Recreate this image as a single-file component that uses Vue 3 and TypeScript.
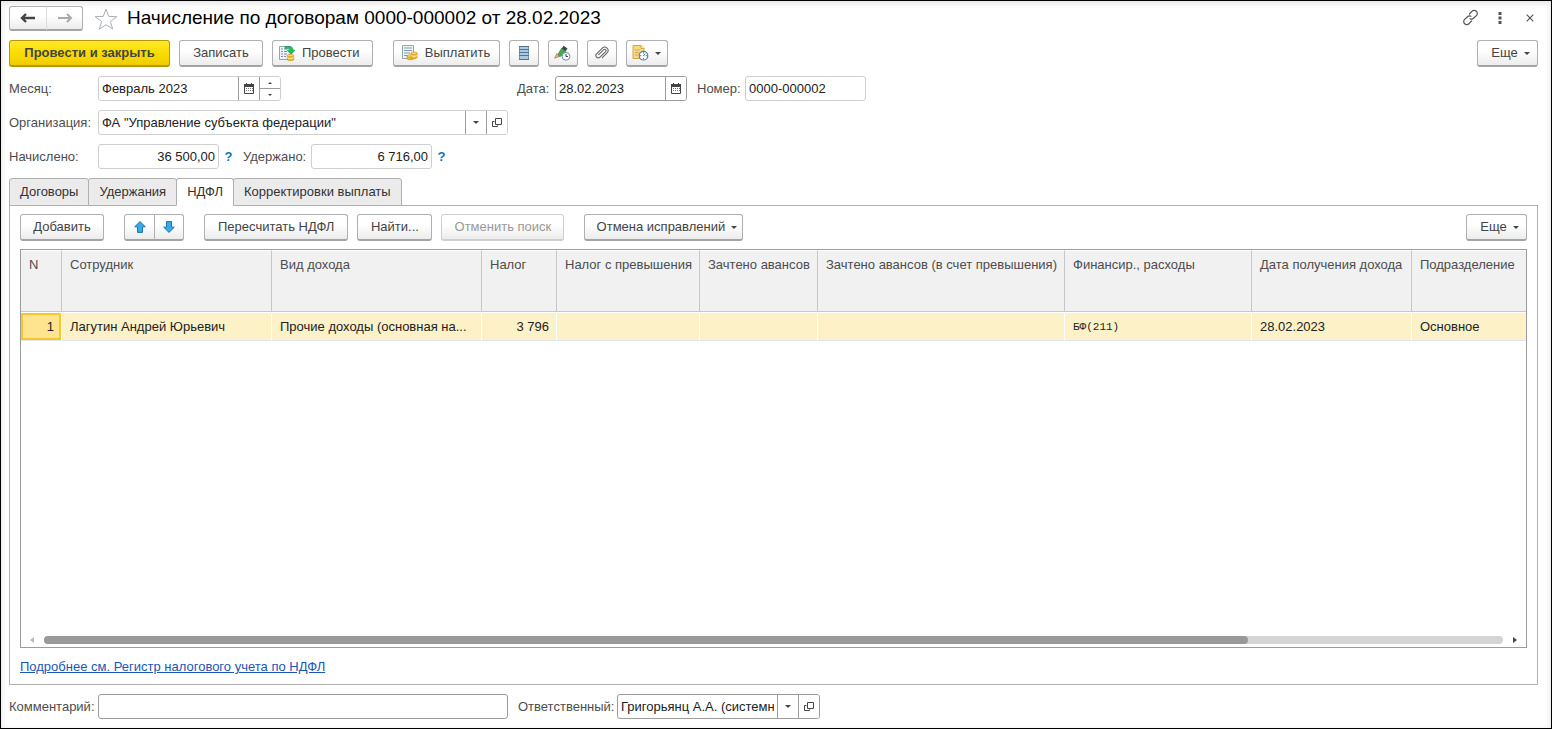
<script setup lang="ts">
import { ref } from 'vue'

interface Column {
  key: string
  title: string
  width?: number
  kind?: 'num' | 'mono'
}

const columns: Column[] = [
  { key: 'n', title: 'N', width: 41, kind: 'num' },
  { key: 'employee', title: 'Сотрудник', width: 210 },
  { key: 'income', title: 'Вид дохода', width: 210 },
  { key: 'tax', title: 'Налог', width: 75, kind: 'num' },
  { key: 'excess', title: 'Налог с превышения', width: 143, kind: 'num' },
  { key: 'advance', title: 'Зачтено авансов', width: 118, kind: 'num' },
  { key: 'advanceExcess', title: 'Зачтено авансов (в счет превышения)', width: 247, kind: 'num' },
  { key: 'funding', title: 'Финансир., расходы', width: 187, kind: 'mono' },
  { key: 'date', title: 'Дата получения дохода', width: 160 },
  { key: 'department', title: 'Подразделение' },
]

const rows: Record<string, string>[] = [
  {
    n: '1',
    employee: 'Лагутин Андрей Юрьевич',
    income: 'Прочие доходы (основная на...',
    tax: '3 796',
    excess: '',
    advance: '',
    advanceExcess: '',
    funding: 'БФ(211)',
    date: '28.02.2023',
    department: 'Основное',
  },
]

const tabs = ['Договоры', 'Удержания', 'НДФЛ', 'Корректировки выплаты']
const activeTab = ref('НДФЛ')

const month = ref('Февраль 2023')
const date = ref('28.02.2023')
const docNumber = ref('0000-000002')
const organization = ref('ФА "Управление субъекта федерации"')
const accrued = ref('36 500,00')
const withheld = ref('6 716,00')
const comment = ref('')
const responsible = ref('Григорьянц А.А. (системн')
</script>

<template>
  <svg class="defs" width="0" height="0" aria-hidden="true">
    <symbol id="i-calendar" viewBox="0 0 10 11">
      <path d="M.5 1.500h9v9h-9z" fill="#fff" stroke="#444" />
      <path d="M0 1h10v3H0zM2 0h1v2H2zM7 0h1v2H7z" fill="#444" />
      <path d="M2 5h1v1H2zM4 5h1v1H4zM6 5h1v1H6zM2 7h1v1H2zM4 7h1v1H4zM6 7h1v1H6zM8 5h1v1H8zM8 7h1v1H8z" fill="#777" />
    </symbol>
    <symbol id="i-open" viewBox="0 0 10 10">
      <path d="M3.500.500h6v6h-6z" fill="none" stroke="#444" />
      <path d="M2.500 3.500h-2v5h5v-1" fill="none" stroke="#444" />
    </symbol>
    <symbol id="i-caret" viewBox="0 0 6 3">
      <path d="M0 0h6L3 3z" fill="#444" />
    </symbol>
  </svg>

  <main class="window">
    <header class="title-bar">
      <div class="button-pair nav">
        <button type="button" class="btn" aria-label="Назад">
          <svg width="16" height="10" viewBox="0 0 16 10"><path d="M2 5h13M6 1L2 5l4 4" fill="none" stroke="#444" stroke-width="2.400" /></svg>
        </button>
        <button type="button" class="btn" aria-label="Вперед">
          <svg width="16" height="10" viewBox="0 0 16 10"><path d="M1 5h12M10 1l4 4-4 4" fill="none" stroke="#aaa" stroke-width="2" /></svg>
        </button>
      </div>
      <button type="button" class="plain star" aria-label="Избранное">
        <svg width="24" height="22" viewBox="0 0 24 22"><path d="M12 1.200l2.700 7.200 8.100.3-6.400 4.900 2.300 7.500L12 16.700l-6.700 4.400 2.300-7.500L1.200 8.700l8.100-.3z" fill="#fff" stroke="#aab0b6" /></svg>
      </button>
      <h1>Начисление по договорам 0000-000002 от 28.02.2023</h1>
      <div class="window-tools">
        <button type="button" class="plain" aria-label="Получить ссылку">
          <svg width="17" height="17" viewBox="0 0 17 17" fill="none" stroke="#555" stroke-width="1.200" stroke-linecap="round"><path d="M7.500 5l2.400-2.700a3 3 0 0 1 4.500 0 3 3 0 0 1 0 4.300L11.500 9.300a2.900 2.900 0 0 1-3.500.4M9.500 12l-2.400 2.700a3 3 0 0 1-4.500 0 3 3 0 0 1 0-4.300l2.900-2.700A2.900 2.900 0 0 1 9 7.300" /></svg>
        </button>
        <button type="button" class="plain" aria-label="Меню">
          <svg width="4" height="12" viewBox="0 0 4 12" fill="#555"><path d="M.5 0h3v3h-3zM.5 4.500h3v3h-3zM.5 9h3v3h-3z" /></svg>
        </button>
        <button type="button" class="plain" aria-label="Закрыть">
          <svg width="8" height="8" viewBox="0 0 8 8"><path d="M.7.700l6.600 6.600M7.300.700L.7 7.300" stroke="#555" stroke-width="1.200" /></svg>
        </button>
      </div>
    </header>

    <div class="toolbar">
      <button type="button" class="btn primary">Провести и закрыть</button>
      <button type="button" class="btn save">Записать</button>
      <button type="button" class="btn with-icon">
        <svg width="16" height="16" viewBox="0 0 16 16">
          <path d="M.5 1.500h11v13H.5z" fill="#eef3f6" stroke="#8fa5b3" />
          <path d="M2 4h2M5 4h3M2 6.500h2M5 6.500h3M2 9h2M5 9h3M2 11.500h2M5 11.500h2" stroke="#7891a2" />
          <path d="M6 1.500h4c3 0 4 1.300 4 3.700h2L12 9.500 8.200 5.200h2.300C10.500 4 10 3.600 8.800 3.600H6z" fill="#25bd62" stroke="#14924a" stroke-width=".6" />
          <path d="M8.300 10.500v4c0 1.700 6.400 1.700 6.400 0v-4z" fill="#efb92e" stroke="#b98610" stroke-width=".6" />
          <path d="M8.300 12.300c0 1.500 6.400 1.500 6.400 0" fill="none" stroke="#fff0a5" />
          <ellipse cx="11.500" cy="10.400" rx="3.200" ry="1.200" fill="#fbd968" stroke="#c9951a" stroke-width=".6" />
        </svg>
        <span>Провести</span>
      </button>
      <button type="button" class="btn with-icon pay">
        <svg width="16" height="16" viewBox="0 0 16 16">
          <path d="M.5.500h11v13H.5z" fill="#f1f5f7" stroke="#8fa5b3" />
          <path d="M2 3h8M2 5.500h8M2 8h6M2 10.500h4" stroke="#8299a8" />
          <path d="M5 11v2.500c0 1.500 6 1.900 6 .2V11z" fill="#efb92e" stroke="#b98610" stroke-width=".6" />
          <ellipse cx="8" cy="11" rx="3" ry="1.200" fill="#fbd968" stroke="#c9951a" stroke-width=".6" />
          <path d="M9 8v4.500c0 2 6 1.600 6 0V8z" fill="#efb92e" stroke="#b98610" stroke-width=".6" />
          <path d="M9 10.300c0 1.400 6 1.400 6 0" fill="none" stroke="#fff0a5" />
          <ellipse cx="12" cy="8.200" rx="3" ry="1.300" fill="#fbd968" stroke="#c9951a" stroke-width=".6" />
        </svg>
        <span>Выплатить</span>
      </button>
      <button type="button" class="btn icon" aria-label="Реестр">
        <svg width="10" height="14" viewBox="0 0 10 14"><path d="M.5.500h9v13h-9z" fill="#a9cbe2" stroke="#6f94b0" /><path d="M0 .500h10M0 3.500h10M0 6.500h10M0 9.500h10M0 13.500h10" stroke="#4f7590" /></svg>
      </button>
      <button type="button" class="btn icon" aria-label="Отложенное исправление">
        <svg width="17" height="16" viewBox="0 0 17 16">
          <path d="M9.500.800l4 2.700-2 3-4-2.700z" fill="#3d4a44" />
          <path d="M7.500 3.500l4 2.800-4.700 5-4.300.3z" fill="#41ad50" stroke="#248238" stroke-width=".6" />
          <path d="M2.800 8.500L.5 13.200l5-1.600z" fill="#e8b487" stroke="#8b5e3b" stroke-width=".5" />
          <circle cx="12" cy="11.300" r="3.900" fill="#fff" stroke="#6a93ab" />
          <path d="M12 9v2.500h2" fill="none" stroke="#345" />
        </svg>
      </button>
      <button type="button" class="btn icon" aria-label="Файлы">
        <svg width="14" height="14" viewBox="0 0 14 14"><path d="M3.700 8.700l5-5a1.300 1.300 0 0 1 1.900 1.900L5 11.200a2.300 2.300 0 0 1-3.400-3.300l5.700-5.800a3.300 3.300 0 0 1 4.800 4.700l-4.800 4.900" fill="none" stroke="#666" stroke-width="1.100" stroke-linecap="round" /></svg>
      </button>
      <button type="button" class="btn icon wide" aria-label="Создать на основании">
        <svg width="17" height="16" viewBox="0 0 17 16">
          <path d="M1 .500h8l3 3v10H1z" fill="#f5da83" stroke="#cfa947" />
          <path d="M9 .500v3h3" fill="#fff3c4" stroke="#cfa947" />
          <path d="M3 5h5M3 7.500h4M3 10h3" stroke="#d0ac4e" />
          <circle cx="11.500" cy="10.700" r="4.300" fill="#fff" stroke="#4c83b5" stroke-width="1.200" />
          <path d="M11.500 7.300v1.200M11.500 13v1.200M8.100 10.700h1.200M13.700 10.700h1.200" stroke="#d33" />
          <path d="M11.300 11l2-2.300" stroke="#2f6ea8" />
        </svg>
        <svg class="caret" width="6" height="3"><use href="#i-caret" /></svg>
      </button>
      <button type="button" class="btn more">Еще <svg class="caret" width="6" height="3"><use href="#i-caret" /></svg></button>
    </div>

    <div class="form-row">
      <label class="lead" for="month">Месяц:</label>
      <div class="slot">
        <div class="field month">
          <input id="month" v-model="month" type="text">
          <button type="button" aria-label="Выбрать месяц"><svg width="10" height="11"><use href="#i-calendar" /></svg></button>
          <div class="spinner">
            <button type="button" aria-label="Следующий месяц"><svg class="up" width="4" height="2"><use href="#i-caret" /></svg></button>
            <button type="button" aria-label="Предыдущий месяц"><svg width="4" height="2"><use href="#i-caret" /></svg></button>
          </div>
        </div>
      </div>
      <label class="date-label" for="date">Дата:</label>
      <div class="field strong date">
        <input id="date" v-model="date" type="text">
        <button type="button" aria-label="Выбрать дату"><svg width="10" height="11"><use href="#i-calendar" /></svg></button>
      </div>
      <label class="number-label" for="number">Номер:</label>
      <div class="field short"><input id="number" v-model="docNumber" type="text"></div>
    </div>

    <div class="form-row">
      <label class="lead" for="organization">Организация:</label>
      <div class="field slot">
        <input id="organization" v-model="organization" type="text">
        <button type="button" aria-label="Выбрать организацию"><svg width="6" height="3"><use href="#i-caret" /></svg></button>
        <button type="button" aria-label="Открыть организацию"><svg width="10" height="10"><use href="#i-open" /></svg></button>
      </div>
    </div>

    <div class="form-row">
      <label class="lead" for="accrued">Начислено:</label>
      <div class="field short amount"><input id="accrued" v-model="accrued" type="text"></div>
      <button type="button" class="plain help">?</button>
      <label class="withheld-label" for="withheld">Удержано:</label>
      <div class="field short amount"><input id="withheld" v-model="withheld" type="text"></div>
      <button type="button" class="plain help">?</button>
    </div>

    <nav class="tabs" role="tablist">
      <button
        v-for="tab in tabs"
        :key="tab"
        type="button"
        role="tab"
        :aria-selected="tab === activeTab"
        :class="{ active: tab === activeTab }"
        @click="activeTab = tab"
      >{{ tab }}</button>
    </nav>

    <section class="panel">
      <div class="toolbar">
        <button type="button" class="btn add">Добавить</button>
        <div class="button-pair spaced">
          <button type="button" class="btn" aria-label="Вверх">
            <svg width="12" height="12" viewBox="0 0 12 12"><path d="M6 .600l5.300 5.200H8.500v5.600h-5V5.800H.7z" fill="#3aa9e8" stroke="#1c75ac" /></svg>
          </button>
          <button type="button" class="btn" aria-label="Вниз">
            <svg width="12" height="12" viewBox="0 0 12 12"><path d="M6 11.400l5.300-5.200H8.500V.600h-5v5.600H.7z" fill="#3aa9e8" stroke="#1c75ac" /></svg>
          </button>
        </div>
        <button type="button" class="btn spaced">Пересчитать НДФЛ</button>
        <button type="button" class="btn find">Найти...</button>
        <button type="button" class="btn cancel" disabled>Отменить поиск</button>
        <button type="button" class="btn spaced menu">Отмена исправлений <svg class="caret" width="6" height="3"><use href="#i-caret" /></svg></button>
        <button type="button" class="btn more">Еще <svg class="caret" width="6" height="3"><use href="#i-caret" /></svg></button>
      </div>

      <div class="grid">
        <table>
          <colgroup>
            <col v-for="c in columns" :key="c.key" :style="c.width ? { width: c.width + 'px' } : undefined">
          </colgroup>
          <thead>
            <tr><th v-for="c in columns" :key="c.key" scope="col">{{ c.title }}</th></tr>
          </thead>
          <tbody>
            <tr v-for="row in rows" :key="row.n">
              <td v-for="c in columns" :key="c.key" :class="[c.kind, { current: c.key === 'n' }]">{{ row[c.key] }}</td>
            </tr>
          </tbody>
        </table>
        <div class="scroll">
          <svg width="4" height="6" viewBox="0 0 4 6"><path d="M4 0v6L0 3z" fill="#bbb" /></svg>
          <div class="track"><div class="thumb"></div></div>
          <svg width="4" height="6" viewBox="0 0 4 6"><path d="M0 0v6l4-3z" fill="#444" /></svg>
        </div>
      </div>

      <a class="register" href="#">Подробнее см. Регистр налогового учета по НДФЛ</a>
    </section>

    <footer class="form-row">
      <label class="lead" for="comment">Комментарий:</label>
      <div class="field strong slot"><input id="comment" v-model="comment" type="text"></div>
      <label class="responsible-label" for="responsible">Ответственный:</label>
      <div class="field strong responsible">
        <input id="responsible" v-model="responsible" type="text">
        <button type="button" aria-label="Выбрать ответственного"><svg width="6" height="3"><use href="#i-caret" /></svg></button>
        <button type="button" aria-label="Открыть ответственного"><svg width="10" height="10"><use href="#i-open" /></svg></button>
      </div>
    </footer>
  </main>
</template>

<style>
body {
  margin: 0;
  background: #fff;
}
</style>

<style scoped>
.defs {
  position: absolute;
}

.window {
  box-sizing: border-box;
  display: flex;
  flex-direction: column;
  min-height: 100vh;
  padding: 5px 13px 9px 8px;
  border: 1px solid #000;
  box-shadow: inset 0 2px 6px rgba(0, 0, 0, 0.12);
  background: #fff;
  color: #333;
  font: 13px/16px "Liberation Sans", Arial, sans-serif;
}

button,
input {
  font: inherit;
  color: inherit;
}

button svg {
  display: block;
  flex: none;
}

.plain {
  display: flex;
  align-items: center;
  justify-content: center;
  padding: 0;
  border: 0;
  background: none;
}

/* Title bar */
.title-bar {
  display: flex;
  align-items: center;
  height: 25px;
  margin-bottom: 9px;
}

.star {
  margin: 0 9px 0 11px;
}

h1 {
  margin: 0;
  padding-bottom: 2px;
  color: #000;
  font-size: 19px;
  font-weight: 400;
  line-height: 24px;
}

.window-tools {
  display: flex;
  align-items: center;
  margin-left: auto;
  gap: 14px;
  padding-bottom: 2px;
}

.window-tools .plain {
  width: 16px;
}

/* Buttons */
.toolbar {
  display: flex;
  gap: 9px;
}

.btn {
  box-sizing: border-box;
  display: flex;
  align-items: center;
  justify-content: center;
  height: 27px;
  padding: 0 13px;
  border: 1px solid #b0b0b0;
  border-bottom: 2px solid #a4a4a4;
  border-radius: 3px;
  background: linear-gradient(#fff 40%, #ececec);
  color: #444;
  white-space: nowrap;
}

.btn:disabled {
  border-color: #cfcfcf;
  color: #999;
}

.btn.primary {
  width: 161px;
  padding: 0;
  border-color: #b49a00;
  background: linear-gradient(#ffe92e, #fbdc00 50%, #f0cd00);
  font-weight: 700;
}

.btn.save,
.btn.add {
  width: 84px;
  padding: 0;
}

.btn.find {
  width: 75px;
  padding: 0;
}

.btn.cancel {
  width: 123px;
  padding: 0;
}

.with-icon {
  gap: 7px;
  padding: 0 12px 0 6px;
}

.btn.pay {
  width: 107px;
  margin-left: 11px;
  padding: 0;
}

.icon {
  width: 30px;
  padding: 0;
}

.icon.wide {
  width: 42px;
}

.caret {
  margin-left: 6px;
}

.btn.menu {
  width: 159px;
  padding: 0 0 0 6px;
}

.btn.more {
  width: 61px;
  margin-left: auto;
  padding: 0 0 0 6px;
}

.spaced {
  margin-left: 11px;
}

.button-pair {
  display: flex;
}

.button-pair .btn {
  width: 31px;
  padding: 0;
}

.button-pair .btn:first-child {
  border-radius: 3px 0 0 3px;
}

.button-pair .btn:last-child {
  width: 30px;
  margin-left: -1px;
  border-radius: 0 3px 3px 0;
}

.button-pair.nav .btn {
  width: 38px;
  height: 25px;
}

.button-pair.nav .btn:last-child {
  width: 37px;
  border-left-color: #ddd;
}

/* Form fields */
.form-row {
  display: flex;
  align-items: center;
  margin-top: 9px;
  color: #4d4d4d;
}

.lead {
  flex: none;
  width: 89px;
}

.slot {
  width: 410px;
}

.field {
  box-sizing: border-box;
  display: flex;
  height: 25px;
  border: 1px solid #cfcfcf;
  border-radius: 3px;
  background: #fff;
  color: #222;
  overflow: hidden;
}

.field.strong {
  border-color: #9c9c9c;
}

.field input {
  flex: 1;
  box-sizing: border-box;
  min-width: 0;
  padding: 0 3px;
  border: 0;
  outline: 0;
  background: none;
}

.field button {
  display: flex;
  align-items: center;
  justify-content: center;
  width: 21px;
  padding: 0;
  border: 0;
  border-left: 1px solid #9c9c9c;
  background: #fff;
}

.spinner {
  display: flex;
  flex-direction: column;
}

.spinner button {
  flex: 1;
}

.spinner button + button {
  border-top: 1px solid #9c9c9c;
}

.up {
  transform: rotate(180deg);
}

.month {
  width: 183px;
}

.date {
  width: 132px;
}

.short {
  width: 121px;
}

.amount input {
  text-align: right;
}

.responsible {
  width: 203px;
}

.date-label {
  width: 38px;
  margin-left: 9px;
}

.number-label {
  width: 48px;
  margin-left: 10px;
}

.withheld-label {
  width: 68px;
  margin-left: 5px;
}

.responsible-label {
  width: 99px;
  margin-left: 10px;
}

.help {
  width: 19px;
  color: #0a78be;
  font-weight: 700;
}

/* Tabs */
.tabs {
  position: relative;
  display: flex;
  margin-top: 9px;
}

.tabs button {
  height: 28px;
  margin-right: -1px;
  padding: 0 10px;
  border: 1px solid #b0b0b0;
  border-radius: 3px 3px 0 0;
  background: #ebebeb;
  color: #333;
}

.tabs .active {
  border-bottom-color: #fff;
  background: #fff;
}

.panel {
  flex: 1;
  display: flex;
  flex-direction: column;
  margin-top: -1px;
  padding: 8px 10px 9px;
  border: 1px solid #b0b0b0;
}

/* Data table */
.grid {
  flex: 1;
  display: flex;
  flex-direction: column;
  margin-top: 8px;
  border: 1px solid #9c9c9c;
}

table {
  width: 100%;
  border-collapse: separate;
  border-spacing: 0;
  table-layout: fixed;
}

th,
td {
  box-sizing: border-box;
  overflow: hidden;
  text-align: left;
  text-overflow: ellipsis;
  white-space: nowrap;
}

th {
  height: 62px;
  padding: 6px 7px 0 8px;
  border: 1px solid #fff;
  border-right-color: #c8c8c8;
  border-bottom-color: #c8c8c8;
  border-left-width: 0;
  background: #f1f1f1;
  color: #4d4d4d;
  font-weight: 400;
  vertical-align: top;
}

td {
  height: 29px;
  padding: 0 7px 0 8px;
  border-top: 1px solid #fff;
  border-right: 1px solid #fff;
  border-bottom: 1px solid #dfe5ea;
  background: #fdf1c7;
  color: #222;
}

th:last-child,
td:last-child {
  border-right-width: 0;
}

.num {
  text-align: right;
}

.mono {
  font-family: "Liberation Mono", monospace;
  font-size: 11px;
}

.current {
  background: #ffe48f;
  box-shadow: inset 0 0 0 2px #f7c72b;
}

.scroll {
  display: flex;
  align-items: center;
  gap: 10px;
  margin-top: auto;
  padding: 3px 9px;
}

.track {
  flex: 1;
  height: 8px;
  border-radius: 4px;
  background: #d4d4d4;
}

.thumb {
  width: 82.5%;
  height: 8px;
  border-radius: 4px;
  background: #999;
}

.register {
  align-self: flex-start;
  margin-top: 11px;
  color: #1a55b8;
}
</style>
